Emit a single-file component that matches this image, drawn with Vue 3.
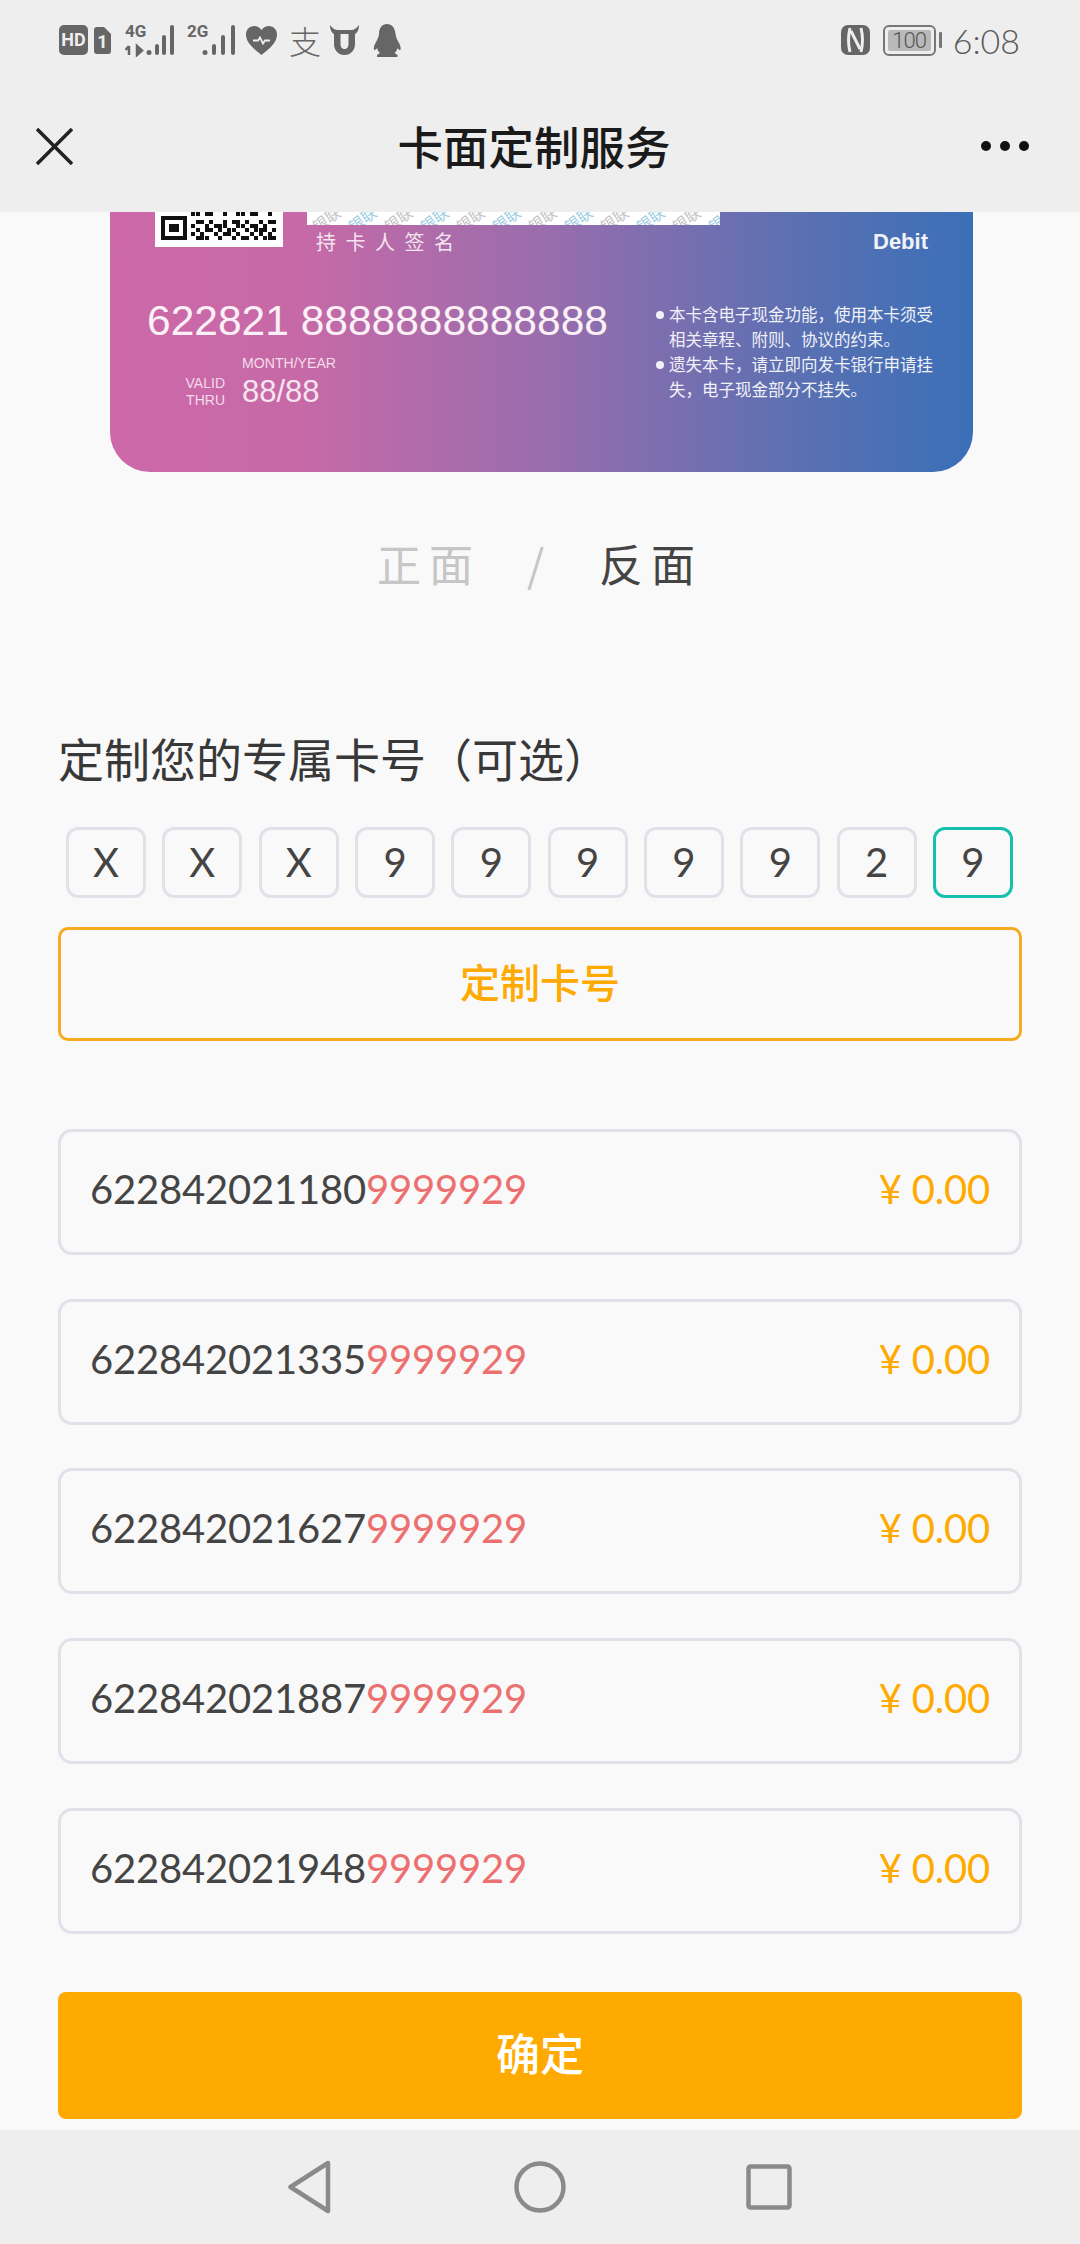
<template>
  <div class="page">
    <header class="topbar">
      <div class="status">
        <div class="status-left">
          <svg class="ic" width="29" height="30" viewBox="0 0 29 30"><rect width="29" height="30" y="0" rx="5" fill="#666" /><text x="14.5" y="21" text-anchor="middle" class="hd">HD</text></svg>
          <svg class="ic sim" width="17" height="27" viewBox="0 0 17 27"><path d="M3 0h7l7 7v17a3 3 0 0 1-3 3H3a3 3 0 0 1-3-3V3a3 3 0 0 1 3-3z" fill="#666" /><text x="8.5" y="21" text-anchor="middle" class="hd">1</text></svg>
          <svg class="ic net" width="50" height="34" viewBox="0 0 50 34">
            <text x="0" y="14" class="gen">4G</text>
            <path d="M4 32V23M0.5 27l3.5-4M12 23v9l5-4.500z" stroke="#666" stroke-width="2.500" fill="#666" />
            <circle cx="24" cy="29.500" r="2.500" fill="#666" />
            <rect x="30" y="21" width="4" height="11" rx="2" fill="#666" />
            <rect x="37" y="12" width="4" height="20" rx="2" fill="#666" />
            <rect x="45" y="2" width="4" height="30" rx="2" fill="#666" />
          </svg>
          <svg class="ic net2" width="49" height="34" viewBox="0 0 49 34">
            <text x="0" y="14" class="gen">2G</text>
            <circle cx="18" cy="29.500" r="2.500" fill="#666" />
            <rect x="25" y="21" width="4" height="11" rx="2" fill="#666" />
            <rect x="34" y="12" width="4" height="20" rx="2" fill="#666" />
            <rect x="44" y="2" width="4" height="30" rx="2" fill="#666" />
          </svg>
          <svg class="ic heart" width="31" height="29" viewBox="0 0 31 29">
            <path d="M15.500 29C6 21.500 0 16 0 8.500 0 3.500 3.800 0 8 0c3 0 5.800 1.500 7.500 4C17.200 1.500 20 0 23 0c4.200 0 8 3.500 8 8.500C31 16 25 21.500 15.500 29z" fill="#666" />
            <path d="M7 14.500h5l2-3 3 6 2-3h5" fill="none" stroke="#eee" stroke-width="1.800" />
          </svg>
          <span class="zhi">支</span>
          <svg class="ic ox" width="29" height="30" viewBox="0 0 29 30">
            <path d="M0 0c0 5 2 8 4 9v10c0 6 4 11 10.500 11S25 25 25 19V9c2-1 4-4 4-9-2 3-5 5-8 5H8C5 5 2 3 0 0z" fill="#666" />
            <path d="M10.500 9h8v10c0 3-1.500 5-4 5s-4-2-4-5z" fill="#eee" />
          </svg>
          <svg class="ic" width="28" height="33" viewBox="0 0 28 33">
            <path d="M14 0c5 0 8 4 8.500 10 .5 4 2 6 4 10 1.500 3 1.500 6 .5 6-1 0-2-1-2.500-2-.5 2-1.500 4-3 5l3 2v2H4v-2l3-2c-1.500-1-2.500-3-3-5-.5 1-1.500 2-2.500 2-1 0-1-3 .5-6 2-4 3.500-6 4-10C6 4 9 0 14 0z" fill="#666" />
          </svg>
        </div>
        <div class="status-right">
          <svg class="ic" width="29" height="30" viewBox="0 0 29 30">
            <rect width="29" height="30" rx="7" fill="#666" />
            <path d="M9 3c-2 8-2 16 0 24M20 3c2 8 2 16 0 24M10 6l9 18" fill="none" stroke="#eee" stroke-width="3" />
          </svg>
          <div class="battery">
            <div class="battery-body"><span class="battery-fill">100</span></div>
            <i class="battery-nub"></i>
          </div>
          <span class="time">6:08</span>
        </div>
      </div>
      <div class="navbar">
        <svg width="37" height="37" viewBox="0 0 37 37"><path d="M1 1l35 35M36 1L1 36" stroke="#222" stroke-width="3.500" /></svg>
        <h1 class="title">卡面定制服务</h1>
        <div class="dots"><i></i><i></i><i></i></div>
      </div>
    </header>

    <section class="card">
      <div class="card-top">
        <div class="qr">
          <svg width="116" height="28" viewBox="0 0 116 28" shape-rendering="crispEdges">
            <path d="M0 4h26v24H0z M4 8v16h18V8z M8 12h10v8H8z" fill="#111" fill-rule="evenodd" />
            <rect v-for="m in qrModules" :key="m.x + '-' + m.y" :x="m.x" :y="m.y" width="4" height="4" fill="#111" />
          </svg>
        </div>
        <div class="sign">
          <div class="sign-strip">
            <span v-for="n in 12" :key="n" class="wm" :class="{ blue: n % 2 === 0 }">银联</span>
          </div>
          <div class="sign-label">持卡人签名</div>
        </div>
        <div class="debit">Debit</div>
      </div>
      <div class="card-bottom">
        <div class="card-left">
          <div class="card-number">622821 8888888888888</div>
          <div class="expiry">
            <div class="valid">VALID<br />THRU</div>
            <div>
              <div class="month">MONTH/YEAR</div>
              <div class="date">88/88</div>
            </div>
          </div>
        </div>
        <ul class="notes">
          <li>本卡含电子现金功能，使用本卡须受相关章程、附则、协议的约束。</li>
          <li>遗失本卡，请立即向发卡银行申请挂失，电子现金部分不挂失。</li>
        </ul>
      </div>
    </section>

    <div class="tabs">
      <span class="tab">正面</span>
      <span class="slash">/</span>
      <span class="tab active">反面</span>
    </div>

    <h2 class="heading">定制您的专属卡号（可选）</h2>

    <div class="digits">
      <div v-for="(d, i) in digits" :key="i" class="digit" :class="{ focus: i === digits.length - 1 }">{{ d }}</div>
    </div>

    <button class="custom-btn">定制卡号</button>

    <ul class="numbers">
      <li v-for="row in rows" :key="row" class="number-row">
        <span class="num">{{ row }}<em>9999929</em></span>
        <span class="price"><b>¥</b>0.00</span>
      </li>
    </ul>

    <button class="confirm">确定</button>

    <footer class="navkeys">
      <svg width="46" height="54" viewBox="0 0 46 54"><path d="M40 3L2.500 27 40 51z" fill="none" stroke="#8a8a8a" stroke-width="4.500" stroke-linejoin="round" /></svg>
      <svg width="52" height="52" viewBox="0 0 52 52"><circle cx="26" cy="26" r="23.500" fill="none" stroke="#8a8a8a" stroke-width="4.500" /></svg>
      <svg width="46" height="46" viewBox="0 0 46 46"><rect x="2.500" y="2.500" width="41" height="41" rx="2" fill="none" stroke="#8a8a8a" stroke-width="4.500" /></svg>
    </footer>
  </div>
</template>

<script setup>
const digits = ['X', 'X', 'X', '9', '9', '9', '9', '9', '2', '9'];
const rows = ['622842021180', '622842021335', '622842021627', '622842021887', '622842021948'];

// scrap of the QR code that stays visible under the header
const qrRows = [
  '1101100100110110010',
  '0000000000000000000',
  '0110100101101001011',
  '1001011100110110100',
  '0101101011001011101',
  '1010010110100101010',
  '0111001001011010111',
];
const qrModules = [];
qrRows.forEach((line, y) => {
  [...line].forEach((v, x) => {
    if (v === '1') qrModules.push({ x: 30 + x * 4.5, y: y * 4 });
  });
});
</script>

<style>
html,
body {
  margin: 0;
  background: #f9f9f9;
}
</style>

<style scoped>
.page {
  width: 1080px;
  height: 2244px;
  display: flex;
  flex-direction: column;
  overflow: hidden;
  background: #f9f9f9;
  font-family: 'Noto Sans CJK SC', 'Noto Sans', sans-serif;
  color: #333;
}

.topbar {
  height: 212px;
  background: #eee;
  flex-shrink: 0;
}
.status {
  height: 80px;
  display: flex;
  justify-content: space-between;
  align-items: center;
  padding: 0 60px 0 59px;
}
.status-left,
.status-right {
  display: flex;
  align-items: center;
}
.ic {
  display: block;
}
.sim {
  margin-left: 6px;
}
.net {
  margin-left: 14px;
}
.net2 {
  margin-left: 12px;
}
.heart {
  margin-left: 10px;
}
.ox {
  margin-left: 9px;
}
.ox + svg {
  margin-left: 14px;
}
.hd {
  font: 700 18px 'Roboto', sans-serif;
  fill: #eee;
}
.gen {
  font: 700 17px 'Roboto', sans-serif;
  fill: #666;
}
.zhi {
  margin-left: 12px;
  width: 32px;
  font-size: 32px;
  line-height: 36px;
  font-weight: 300;
  color: #666;
}
.battery {
  display: flex;
  align-items: center;
  margin-left: 13px;
}
.battery-body {
  width: 53px;
  height: 31px;
  box-sizing: border-box;
  border: 2px solid #777;
  border-radius: 6px;
  padding: 3px;
}
.battery-fill {
  display: block;
  height: 21px;
  text-align: center;
  background: #b9b9b9;
  border-radius: 2px;
  font: 300 22px/21px 'Roboto', sans-serif;
  color: #555;
  letter-spacing: -1px;
}
.battery-nub {
  width: 3px;
  height: 16px;
  margin-left: 3px;
  background: #777;
  border-radius: 1px;
}
.time {
  margin-left: 11px;
  font: 300 34px 'Lato', sans-serif;
  color: #5a5a5a;
}

.navbar {
  height: 132px;
  display: flex;
  align-items: center;
  justify-content: space-between;
  padding: 0 51px 0 36px;
}
.title {
  margin: 0 0 0 14px;
  font-size: 45.500px;
  font-weight: 500;
  color: #1a1a1a;
  line-height: 1;
}
.dots {
  display: flex;
  gap: 9px;
}
.dots i {
  width: 10px;
  height: 10px;
  border-radius: 50%;
  background: #111;
}

.card {
  flex-shrink: 0;
  height: 260px;
  margin: 0 107px 0 110px;
  box-sizing: border-box;
  border-radius: 0 0 40px 40px;
  background: linear-gradient(90deg, #cd69a8 0%, #c769a7 22%, #9a6dad 50%, #5a70b2 80%, #3b6fb8 100%);
  color: #fff;
  font-family: 'Liberation Sans', Arial, sans-serif;
  overflow: hidden;
}
.card-top {
  display: flex;
  height: 40px;
  padding: 0 45px;
}
.qr {
  width: 128px;
  height: 35px;
  box-sizing: border-box;
  padding-left: 6px;
  background: #fff;
}
.qr svg {
  display: block;
}
.sign {
  margin-left: 24px;
  width: 413px;
}
.sign-strip {
  height: 13px;
  display: flex;
  gap: 6px;
  padding-left: 4px;
  overflow: hidden;
  background: #fff;
}
.wm {
  flex-shrink: 0;
  font-size: 15px;
  line-height: 13px;
  width: 30px;
  color: #c4c4c4;
  transform: rotate(-35deg);
  font-family: 'Noto Sans CJK SC', sans-serif;
}
.wm.blue {
  color: #9ccde2;
}
.sign-label {
  margin: 6px 0 0 9px;
  font: 20px/22px 'Noto Sans CJK SC', sans-serif;
  letter-spacing: 9.500px;
  white-space: nowrap;
  color: #f3e4ef;
}
.debit {
  margin-left: auto;
  margin-top: 17px;
  font-size: 22px;
  line-height: 26px;
  font-weight: 700;
  color: #f2f3fa;
}
.card-bottom {
  display: flex;
  padding: 45px 0 0 37px;
}
.card-left {
  width: 509px;
}
.card-number {
  font-size: 42.500px;
  line-height: 48px;
  white-space: nowrap;
  color: #fbf0f6;
}
.expiry {
  display: flex;
  margin: 9px 0 0 38px;
}
.valid {
  width: 40px;
  margin: 21px 17px 0 0;
  font-size: 14px;
  line-height: 16.500px;
  text-align: right;
  color: #f2dcea;
}
.month {
  font-size: 14.100px;
  line-height: 18px;
  white-space: nowrap;
  color: #f2dcea;
}
.date {
  font-size: 31px;
  line-height: 36px;
  margin-top: 2px;
  color: #f5e5ef;
}
.notes {
  list-style: none;
  margin: 6px 0 0;
  padding: 0 0 0 13px;
  width: 280px;
  font: 16.500px/25px 'Liberation Serif', 'Noto Sans CJK SC', serif;
  color: #f1f1f8;
}
.notes li {
  position: relative;
}
.notes li::before {
  content: '';
  position: absolute;
  left: -13px;
  top: 8px;
  width: 8px;
  height: 8px;
  border-radius: 50%;
  background: #f1f1f8;
}

.tabs {
  flex-shrink: 0;
  height: 60px;
  margin-top: 61px;
  display: flex;
  align-items: center;
  justify-content: center;
  font-size: 44px;
  line-height: 60px;
}
.tab {
  letter-spacing: 8px;
  color: #c6c6c6;
}
.tab.active {
  color: #444;
}
.slash {
  margin: 0 56px 0 46px;
  width: 16px;
  color: #c6c6c6;
  text-align: center;
}

.heading {
  flex-shrink: 0;
  margin: 132px 0 0 58px;
  font-size: 46px;
  line-height: 64px;
  font-weight: 400;
  color: #383838;
}

.digits {
  flex-shrink: 0;
  margin: 38px 67px 0 66px;
  display: flex;
  justify-content: space-between;
}
.digit {
  width: 80px;
  height: 71px;
  box-sizing: border-box;
  border: 3px solid #e0e2ea;
  border-radius: 12px;
  padding-bottom: 2px;
  display: flex;
  align-items: center;
  justify-content: center;
  font: 400 40px 'Lato', sans-serif;
  color: #444;
}
.digit.focus {
  border-color: #17bfae;
}

.custom-btn {
  flex-shrink: 0;
  margin: 29px 58px 0;
  height: 114px;
  box-sizing: border-box;
  border: 3px solid #f5ab1f;
  border-radius: 10px;
  padding: 0 0 6px;
  background: transparent;
  font-family: inherit;
  font-size: 40px;
  font-weight: 500;
  color: #ffaa00;
}

.numbers {
  flex-shrink: 0;
  list-style: none;
  margin: 88px 58px 0;
  padding: 0;
  display: flex;
  flex-direction: column;
  gap: 43.700px;
}
.number-row {
  height: 126px;
  box-sizing: border-box;
  border: 3px solid #e0e2ea;
  border-radius: 14px;
  padding: 0 29px 6px;
  display: flex;
  align-items: center;
  justify-content: space-between;
  font: 400 40px 'Lato', sans-serif;
  letter-spacing: -0.200px;
  color: #444;
}
.num em {
  font-style: normal;
  color: #ec7070;
}
.price {
  color: #ffaa00;
  display: flex;
  align-items: center;
}
.price b {
  font-weight: 400;
  width: 33px;
}

.confirm {
  flex-shrink: 0;
  margin: 58px 58px 0;
  height: 127px;
  border: none;
  border-radius: 8px;
  padding: 0 0 6px;
  background: #ffaa00;
  font-family: inherit;
  font-size: 44px;
  font-weight: 500;
  color: #fff;
}

.navkeys {
  margin-top: auto;
  height: 114px;
  flex-shrink: 0;
  background: #eee;
  display: grid;
  grid-template-columns: 46px 52px 46px;
  column-gap: 180px;
  align-items: center;
  justify-content: center;
}
</style>
